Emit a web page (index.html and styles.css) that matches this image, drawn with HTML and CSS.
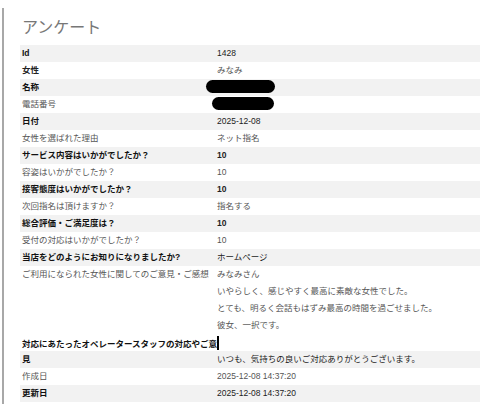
FILE: index.html
```html
<!DOCTYPE html>
<html lang="ja">
<head>
    <meta charset="UTF-8">
    <meta name="viewport" content="width=device-width, initial-scale=1.0">
    <title>アンケート</title>
    <link rel="stylesheet" href="styles.css">
</head>
<body>

    <div class="panel">
        <h1 class="title">アンケート</h1>

        <div class="rows">
            <div class="row strong"><div class="label">Id</div><div class="value">1428</div></div>
            <div class="row"><div class="label dark">女性</div><div class="value">みなみ</div></div>
            <div class="row strong"><div class="label">名称</div><div class="value"><span class="mask mask-name"></span></div></div>
            <div class="row"><div class="label">電話番号</div><div class="value"><span class="mask mask-tel"></span></div></div>
            <div class="row strong"><div class="label">日付</div><div class="value">2025-12-08</div></div>
            <div class="row"><div class="label">女性を選ばれた理由</div><div class="value">ネット指名</div></div>
            <div class="row strong"><div class="label">サービス内容はいかがでしたか？</div><div class="value bold">10</div></div>
            <div class="row"><div class="label">容姿はいかがでしたか？</div><div class="value">10</div></div>
            <div class="row strong"><div class="label">接客態度はいかがでしたか？</div><div class="value bold">10</div></div>
            <div class="row"><div class="label">次回指名は頂けますか？</div><div class="value">指名する</div></div>
            <div class="row strong"><div class="label">総合評価・ご満足度は？</div><div class="value bold">10</div></div>
            <div class="row"><div class="label">受付の対応はいかがでしたか？</div><div class="value">10</div></div>
            <div class="row strong"><div class="label">当店をどのようにお知りになりましたか?</div><div class="value">ホームページ</div></div>
            <div class="row">
                <div class="label">ご利用になられた女性に関してのご意見・ご感想</div>
                <div class="value">
                    <div>みなみさん</div>
                    <div>いやらしく、感じやすく最高に素敵な女性でした。</div>
                    <div>とても、明るく会話もはずみ最高の時間を過ごせました。</div>
                    <div>彼女、一択です。</div>
                </div>
            </div>
            <!-- ラベルが長すぎて折り返している行 -->
            <div class="row-wide"><span class="label-long">対応にあたったオペレータースタッフの対応やご意</span><span class="caret"></span></div>
            <div class="row strong"><div class="label">見</div><div class="value">いつも、気持ちの良いご対応ありがとうございます。</div></div>
            <div class="row"><div class="label">作成日</div><div class="value">2025-12-08 14:37:20</div></div>
            <div class="row strong"><div class="label">更新日</div><div class="value">2025-12-08 14:37:20</div></div>
        </div>
    </div>

</body>
</html>
```

FILE: styles.css
```css
/* 全体 */
body {
    margin: 0;
    font-family: 'Liberation Sans', 'Noto Sans CJK JP', sans-serif;
    background-color: #ffffff;
    color: #555;
}

/* 左の枠線つきパネル */
.panel {
    margin: 8px 0 0 2px;
    padding: 0 0 0 16px;
    border-left: 2px solid #a8a8a8;
    min-height: 396px;
}

.title {
    margin: 0;
    padding: 9px 0 0 2px;
    height: 28px;
    font-size: 16px;
    font-weight: normal;
    line-height: 22px;
    color: #777;
}

/* 行 */
.row {
    display: grid;
    grid-template-columns: 195px 1fr;
    font-size: 8.5px;
    line-height: 17px;
}

.label,
.value {
    padding-left: 2px;
    white-space: nowrap;
}

.label.dark {
    font-weight: bold;
    color: #222;
}

.row.strong {
    background-color: #f2f2f2;
}

.row.strong .label {
    font-weight: bold;
    color: #111;
}

.row.strong .value {
    color: #222;
}

.value.bold {
    font-weight: bold;
}

/* 黒塗り */
.mask {
    display: inline-block;
    height: 13px;
    border-radius: 7px;
    background-color: #000;
    vertical-align: middle;
    position: relative;
    top: -1px;
}

.mask-name {
    width: 69px;
    margin-left: -11px;
}

.mask-tel {
    width: 62px;
    margin-left: -5px;
}

/* 長いラベルの行 */
.row-wide {
    display: flex;
    align-items: center;
    height: 17px;
    padding-left: 2px;
    font-size: 8.5px;
    font-weight: bold;
    color: #111;
    white-space: nowrap;
}

.caret {
    display: inline-block;
    width: 2px;
    height: 14px;
    background-color: #000;
    margin-left: 0;
}
```
